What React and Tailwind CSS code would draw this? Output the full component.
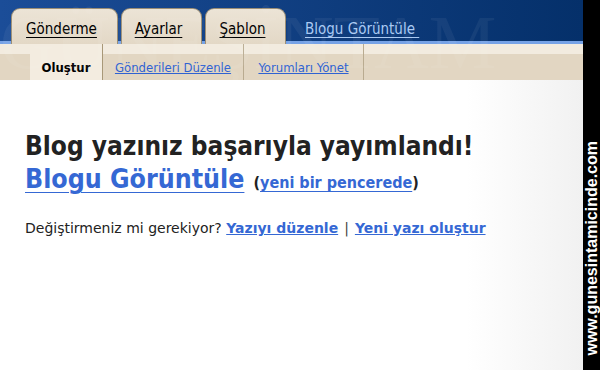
const font = { fontFamily: '"DejaVu Sans Condensed", "DejaVu Sans", sans-serif' };
const wide = { fontFamily: '"DejaVu Sans", sans-serif' };

function Tab({ label, width }) {
  return (
    <div
      className={`${width} h-[36px] rounded-t-[9px] border border-b-0 border-[#9c8e74] bg-gradient-to-b from-[#ece4d6] to-[#e3d8c6] flex items-center justify-center pt-[6px]`}
    >
      <span className="text-[15px] text-black underline underline-offset-[3px] decoration-1 pr-[6px]">{label}</span>
    </div>
  );
}

export default function App() {
  return (
    <div className="w-[600px] h-[370px] flex overflow-hidden bg-white" style={font}>
      <div className="flex-1 flex flex-col relative bg-gradient-to-r from-white from-80% to-[#f1f1f1]">
        <div className="h-[44px] flex items-end pl-[11px] gap-[3px] bg-gradient-to-r from-[#1b4d98] to-[#05306a] shadow-[inset_0_-3px_0_#76a2e6]">
          <Tab label="Gönderme" width="w-[107px]" />
          <Tab label="Ayarlar" width="w-[81px]" />
          <Tab label="Şablon" width="w-[81px]" />
          <span className="self-center mt-[14px] ml-[16px] text-[15px] text-[#a9c9f3] underline underline-offset-[3px] decoration-1">
            Blogu Görüntüle&nbsp;
          </span>
        </div>

        <div className="h-[36px] flex bg-[linear-gradient(#f2ebdf_0,#f2ebdf_10px,#e2d6c2_10px)] text-[13px]">
          <div className="w-[30px]" />
          <div className="w-[73px] bg-[#f3ece0] border-r border-[#a89878] flex items-center justify-center pt-[12px] font-bold text-black">
            Oluştur
          </div>
          <div className="w-[141px] border-r border-[#b9ab90] flex items-center justify-center pt-[12px]">
            <span className="text-[#2f62d2] underline">Gönderileri Düzenle</span>
          </div>
          <div className="w-[120px] border-r border-[#b9ab90] flex items-center justify-center pt-[12px]">
            <span className="text-[#2f62d2] underline">Yorumları Yönet</span>
          </div>
        </div>

        <div className="pl-[25px] pt-[51px] text-[#222]">
          <h1 className="text-[26px] font-bold leading-[30px]">Blog yazınız başarıyla yayımlandı!</h1>
          <div className="flex items-baseline gap-[9px] leading-[36px]">
            <span className="text-[26.5px] font-bold text-[#3568d4] underline decoration-1 underline-offset-[4px]">
              Blogu Görüntüle
            </span>
            <span className="text-[16px] font-bold">
              (<span className="text-[#3568d4] underline underline-offset-[3px]">yeni bir pencerede</span>)
            </span>
          </div>
          <p className="mt-[17px] text-[14px]" style={wide}>
            Değiştirmeniz mi gerekiyor?{' '}
            <span className="font-bold text-[#3568d4] underline">Yazıyı düzenle</span>
            <span className="mx-[6px] text-[#444]">|</span>
            <span className="font-bold text-[#3568d4] underline">Yeni yazı oluştur</span>
          </p>
        </div>

        <div className="absolute left-0 top-0 w-full h-[80px] overflow-hidden pointer-events-none select-none">
          <div
            className="pl-[-20px] pt-[4px] text-[76px] leading-none text-white opacity-[0.05] whitespace-nowrap"
            style={{ fontFamily: '"Liberation Serif", serif' }}
          >
            GÜNEŞİNTAM
          </div>
        </div>
      </div>

      <div className="w-[17px] bg-black flex items-end justify-center pb-[14px]">
        <span
          className="[writing-mode:vertical-rl] rotate-180 text-white text-[16px] font-bold"
          style={{ fontFamily: '"Liberation Sans", sans-serif' }}
        >
          www.gunesintamicinde.com
        </span>
      </div>
    </div>
  );
}
